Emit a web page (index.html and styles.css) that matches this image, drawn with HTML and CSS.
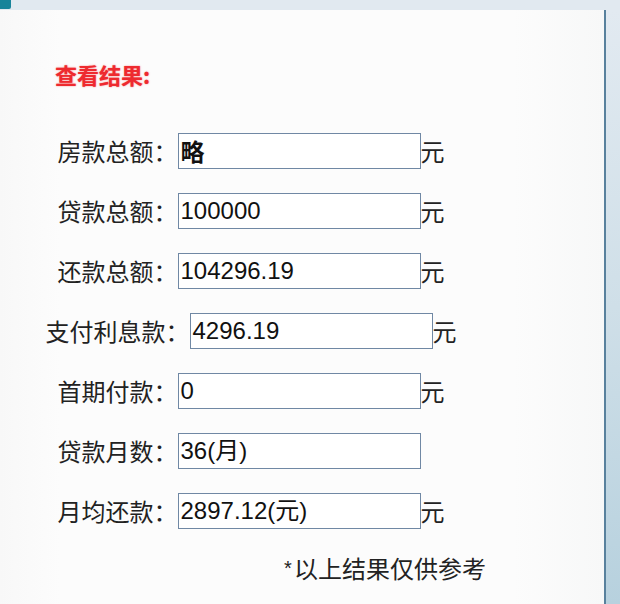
FILE: index.html
```html
<!DOCTYPE html>
<html lang="zh">
<head>
<meta charset="utf-8">
<link rel="stylesheet" href="styles.css">
</head>
<body>
<div class="frame">
  <div class="topbar"><span class="tab"></span></div>
  <div class="main">
    <div class="card">
      <div class="title">查看结果:</div>
      <div class="rows">
        <div class="row"><span class="label">房款总额：</span><div class="field bold">略</div><span class="unit">元</span></div>
        <div class="row"><span class="label">贷款总额：</span><div class="field">100000</div><span class="unit">元</span></div>
        <div class="row"><span class="label">还款总额：</span><div class="field">104296.19</div><span class="unit">元</span></div>
        <div class="row"><span class="label">支付利息款：</span><div class="field">4296.19</div><span class="unit">元</span></div>
        <div class="row"><span class="label">首期付款：</span><div class="field">0</div><span class="unit">元</span></div>
        <div class="row"><span class="label">贷款月数：</span><div class="field">36(月)</div><span class="unit hidden">元</span></div>
        <div class="row"><span class="label">月均还款：</span><div class="field">2897.12(元)</div><span class="unit">元</span></div>
      </div>
      <div class="note"><span class="star">*</span>以上结果仅供参考</div>
    </div>
    <div class="side"></div>
  </div>
</div>
</body>
</html>
```

FILE: styles.css
```css
html, body {
  margin: 0;
  padding: 0;
}
body {
  width: 620px;
  height: 604px;
  overflow: hidden;
  background: #e1e8ef;
  font-family: "Noto Sans CJK SC", sans-serif;
  color: #1c1c1c;
}
.frame {
  display: flex;
  flex-direction: column;
  height: 604px;
}
.topbar {
  height: 10px;
  background: #e1e9f0;
  display: flex;
}
.tab {
  width: 11px;
  height: 9px;
  background: #17849a;
  border-bottom-right-radius: 2px;
}
.main {
  flex: 1;
  display: flex;
}
.card {
  background: linear-gradient(to right, #f8f8f8 0%, #fcfcfc 10%, #fcfcfc 85%, #f7f8f8 100%);
  border-right: 2px solid #58819d;
  box-sizing: border-box;
  width: 606px;
  padding-top: 49px;
}
.side {
  flex: 1;
  background: linear-gradient(to bottom, #e2eaf1 0%, #cfdfe8 50%, #b7d1de 100%);
}
.title {
  padding-left: 55px;
  font-size: 22px;
  line-height: 30px;
  font-weight: bold;
  color: #ee2a2f;
  text-shadow: 0 0 1.5px rgba(238, 42, 47, 0.7);
}
.rows {
  margin-top: 44px;
  width: 502px;
  display: flex;
  flex-direction: column;
  gap: 24px;
}
.row {
  display: flex;
  justify-content: center;
  align-items: center;
  height: 36px;
}
.label {
  font-size: 24px;
  line-height: 36px;
  white-space: nowrap;
  color: #222;
}
.field {
  width: 243px;
  height: 36px;
  box-sizing: border-box;
  border: 1px solid #7088a4;
  background: #fff;
  font-family: "Liberation Sans", "Noto Sans CJK SC", sans-serif;
  font-size: 24px;
  line-height: 34px;
  padding-left: 2px;
  color: #111;
  white-space: nowrap;
}
.field.bold {
  font-family: "Noto Sans CJK SC", sans-serif;
  font-weight: bold;
}
.unit {
  width: 24px;
  font-size: 24px;
  line-height: 36px;
  color: #222;
}
.hidden {
  visibility: hidden;
}
.note {
  margin-top: 23px;
  padding-left: 284px;
  font-size: 24px;
  line-height: 32px;
  color: #222;
}
.star {
  display: inline-block;
  width: 10px;
  font-family: "Liberation Sans", sans-serif;
  font-size: 20px;
  vertical-align: 3px;
}
```
